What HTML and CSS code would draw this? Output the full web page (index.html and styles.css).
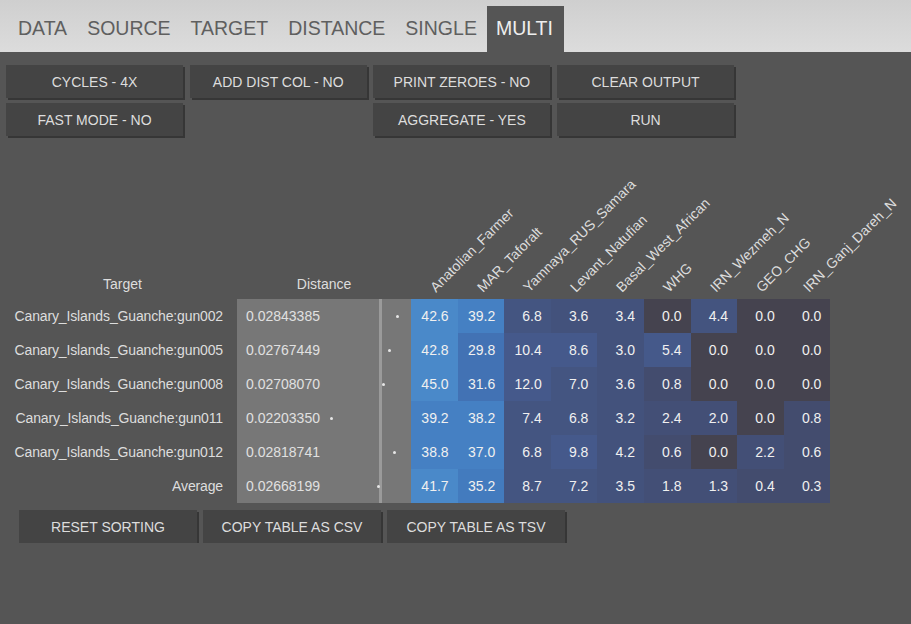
FILE: index.html
```html
<!DOCTYPE html>
<html>
<head>
<meta charset="utf-8">
<link rel="stylesheet" href="styles.css">
</head>
<body>
<nav class="tabs">
  <div class="tab">DATA</div>
  <div class="tab">SOURCE</div>
  <div class="tab">TARGET</div>
  <div class="tab">DISTANCE</div>
  <div class="tab">SINGLE</div>
  <div class="tab active">MULTI</div>
</nav>
<div class="controls">
  <button class="btn">CYCLES - 4X</button>
  <button class="btn">ADD DIST COL - NO</button>
  <button class="btn">PRINT ZEROES - NO</button>
  <button class="btn">CLEAR OUTPUT</button>
  <button class="btn">FAST MODE - NO</button>
  <div class="spacer"></div>
  <button class="btn">AGGREGATE - YES</button>
  <button class="btn">RUN</button>
</div>
<table class="results">
  <colgroup>
    <col class="c-target"><col class="c-dist">
    <col class="c-data"><col class="c-data"><col class="c-data"><col class="c-data"><col class="c-data"><col class="c-data"><col class="c-data"><col class="c-data"><col class="c-data">
  </colgroup>
  <thead>
    <tr>
      <th class="h-plain">Target</th>
      <th class="h-plain">Distance</th>
      <th class="rot"><span>Anatolian_Farmer</span></th>
      <th class="rot"><span>MAR_Taforalt</span></th>
      <th class="rot"><span>Yamnaya_RUS_Samara</span></th>
      <th class="rot"><span>Levant_Natufian</span></th>
      <th class="rot"><span>Basal_West_African</span></th>
      <th class="rot"><span>WHG</span></th>
      <th class="rot"><span>IRN_Wezmeh_N</span></th>
      <th class="rot"><span>GEO_CHG</span></th>
      <th class="rot"><span>IRN_Ganj_Dareh_N</span></th>
    </tr>
  </thead>
  <tbody>
    <tr>
      <td class="name">Canary_Islands_Guanche:gun002</td>
      <td class="dist">0.02843385<span class="dot" style="left:158.5px"></span></td>
      <td class="v8">42.6</td><td class="v7">39.2</td><td class="v4">6.8</td><td class="v3">3.6</td><td class="v3">3.4</td><td class="v0">0.0</td><td class="v3b">4.4</td><td class="v0">0.0</td><td class="v0">0.0</td>
    </tr>
    <tr>
      <td class="name">Canary_Islands_Guanche:gun005</td>
      <td class="dist">0.02767449<span class="dot" style="left:150.7px"></span></td>
      <td class="v8">42.8</td><td class="v6">29.8</td><td class="v5">10.4</td><td class="v5">8.6</td><td class="v3">3.0</td><td class="v4b">5.4</td><td class="v0">0.0</td><td class="v0">0.0</td><td class="v0">0.0</td>
    </tr>
    <tr>
      <td class="name">Canary_Islands_Guanche:gun008</td>
      <td class="dist">0.02708070<span class="dot" style="left:144.5px"></span></td>
      <td class="v8">45.0</td><td class="v6">31.6</td><td class="v5">12.0</td><td class="v4">7.0</td><td class="v3">3.6</td><td class="v1">0.8</td><td class="v0">0.0</td><td class="v0">0.0</td><td class="v0">0.0</td>
    </tr>
    <tr>
      <td class="name">Canary_Islands_Guanche:gun011</td>
      <td class="dist">0.02203350<span class="dot" style="left:92.5px"></span></td>
      <td class="v7">39.2</td><td class="v7">38.2</td><td class="v4">7.4</td><td class="v4">6.8</td><td class="v3">3.2</td><td class="v2">2.4</td><td class="v2">2.0</td><td class="v0">0.0</td><td class="v1">0.8</td>
    </tr>
    <tr>
      <td class="name">Canary_Islands_Guanche:gun012</td>
      <td class="dist">0.02818741<span class="dot" style="left:156px"></span></td>
      <td class="v7">38.8</td><td class="v7">37.0</td><td class="v4">6.8</td><td class="v5">9.8</td><td class="v3">4.2</td><td class="v1">0.6</td><td class="v0">0.0</td><td class="v2">2.2</td><td class="v1">0.6</td>
    </tr>
    <tr>
      <td class="name">Average</td>
      <td class="dist">0.02668199<span class="dot" style="left:140.4px"></span></td>
      <td class="v8">41.7</td><td class="v7b">35.2</td><td class="v4">8.7</td><td class="v4">7.2</td><td class="v3">3.5</td><td class="v2">1.8</td><td class="v2">1.3</td><td class="v1">0.4</td><td class="v1">0.3</td>
    </tr>
  </tbody>
</table>
<div class="table-actions">
  <button class="btn">RESET SORTING</button>
  <button class="btn">COPY TABLE AS CSV</button>
  <button class="btn">COPY TABLE AS TSV</button>
</div>
</body>
</html>
```
FILE: styles.css
```css
html, body {
  margin: 0;
  padding: 0;
  background: #555555;
  font-family: "Liberation Sans", Arial, sans-serif;
  color: #dddddd;
}

.tabs {
  display: flex;
  align-items: flex-end;
  height: 52px;
  padding-left: 8px;
  background: linear-gradient(#cfcfcf, #dcdcdc);
  box-sizing: border-box;
}

.tab {
  height: 46px;
  line-height: 45px;
  padding: 0 10px;
  font-size: 19.5px;
  color: #5f5f5f;
}

.tab.active {
  background: #555555;
  color: #eeeeee;
  padding: 0 11px 0 9px;
}

.btn {
  height: 33px;
  padding: 0;
  border: none;
  background: #444444;
  color: #dddddd;
  font-family: "Liberation Sans", Arial, sans-serif;
  font-size: 14px;
  box-shadow: 2px 2px 0 #363636;
  cursor: pointer;
}

.controls {
  display: grid;
  grid-template-columns: repeat(4, 177px);
  column-gap: 6.7px;
  row-gap: 5px;
  padding: 13px 0 0 6px;
}

.results {
  margin: 16px 0 0 8px;
  border-collapse: collapse;
  border-spacing: 0;
  table-layout: fixed;
  width: 822.4px;
  font-size: 14px;
}

.c-target { width: 229px; }
.c-dist { width: 174px; }
.c-data { width: 46.6px; }

.results thead tr { height: 147px; }

.results th {
  font-weight: normal;
  vertical-align: bottom;
  padding: 0 0 7px 0;
  color: #dddddd;
  white-space: nowrap;
}

.h-plain { text-align: center; }

.rot {
  position: relative;
}

.rot span {
  position: absolute;
  left: 27px;
  bottom: 4px;
  transform-origin: 0 100%;
  transform: rotate(-45deg);
  white-space: nowrap;
}

.results tbody tr { height: 34px; }

.results td {
  padding: 0;
  white-space: nowrap;
}

.name {
  text-align: right;
  padding-right: 14px !important;
  letter-spacing: -0.14px;
}

.dist {
  position: relative;
  background: #777777;
  padding-left: 9px !important;
  color: #e0e0e0;
}

.dist::after {
  content: "";
  position: absolute;
  left: 142px;
  top: 0;
  bottom: 0;
  width: 3px;
  background: #9a9a9a;
}

.dot {
  position: absolute;
  top: 15.5px;
  width: 3px;
  height: 3px;
  border-radius: 50%;
  background: #e6e6e6;
  z-index: 1;
}

.results td[class^="v"] {
  text-align: right;
  padding-right: 9px;
  color: #f0f0f0;
}

.v0 { background: #45434f; }
.v1 { background: #434c6e; }
.v2 { background: #434f76; }
.v3 { background: #43527c; }
.v3b { background: #44547f; }
.v4 { background: #445581; }
.v4b { background: #45598a; }
.v5 { background: #45598b; }
.v6 { background: #4272b4; }
.v7 { background: #4580c3; }
.v7b { background: #437bbe; }
.v8 { background: #4a89c9; }

.table-actions {
  display: flex;
  gap: 6px;
  margin: 7px 0 0 19px;
}

.table-actions .btn {
  width: 178px;
}
```
